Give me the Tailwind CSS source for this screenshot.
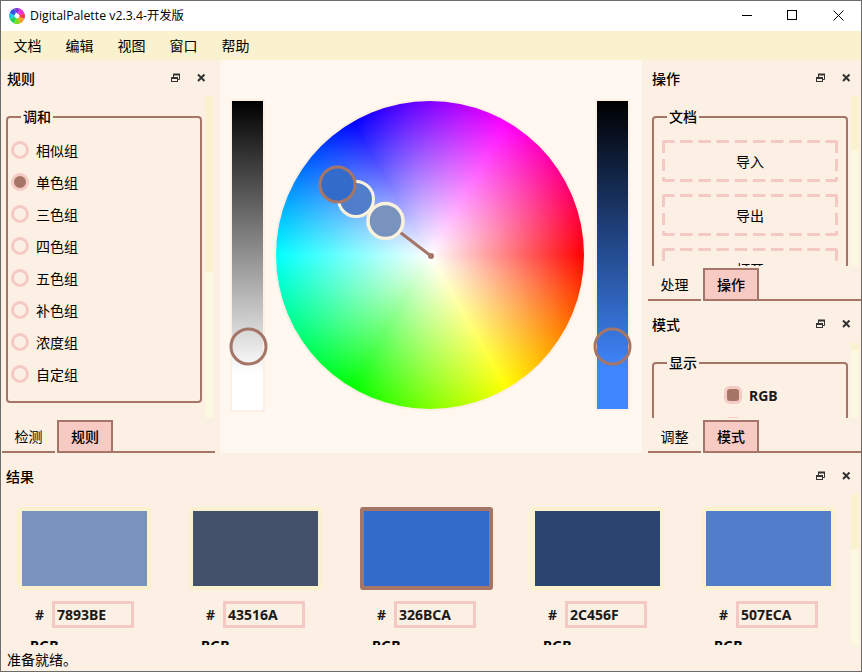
<!DOCTYPE html>
<html lang="zh-CN">
<head>
<meta charset="utf-8">
<title>DigitalPalette</title>
<script src="https://cdn.jsdelivr.net/npm/@tailwindcss/browser@4"></script>
</head>
<body class="w-[862px] h-[672px] overflow-hidden font-['Noto_Sans','Noto_Sans_CJK_SC',sans-serif] text-[14px] leading-5 text-black">
<svg class="absolute w-0 h-0">
  <defs>
    <pattern id="dots" width="2" height="2" patternUnits="userSpaceOnUse"><rect width="2" height="2" fill="#fefaec"/><rect width="1" height="1" fill="#f9f4d2"/><rect x="1" y="1" width="1" height="1" fill="#f9f4d2"/></pattern>
    <symbol id="dock" viewBox="0 0 40 12">
      <g fill="none" stroke="#333"><path d="M3.5 4V1.5H9.5V6.5H8"/><path d="M3 1.500H10M1 5H8" stroke-width="2"/><rect x="1.500" y="4.500" width="6" height="4"/></g>
      <path d="M28 1.500L34.500 8M34.500 1.500L28 8" stroke="#333" stroke-width="2"/>
    </symbol>
    <symbol id="dash" viewBox="0 0 176 42">
      <g stroke="#f4c9c3" stroke-width="3" fill="none">
        <path d="M1 1.500H176M1 40.500H176" stroke-dasharray="11.500 5.670 12.500 5.670 12.500 5.670 12.500 5.670 12.500 5.670 12.500 5.670 12.500 5.670 12.500 5.670 12.500 5.670 11.500 9"/>
        <path d="M1.500 1V42M174.500 1V42" stroke-dasharray="12 6 12 6 4 9"/>
      </g>
    </symbol>
  </defs>
</svg>
<div class="w-[862px] h-[672px] border border-[#6b6b6b] bg-[#fcefe3] flex flex-col">
  <header class="h-[30px] shrink-0 bg-white flex items-center pl-2">
    <svg width="16" height="16" viewBox="-8 -8 16 16"><g>
      <path d="M0 0L-3 -7.400A8 8 0 0 1 3 -7.400Z" fill="#8a35d8"/><path d="M0 0L3 -7.400A8 8 0 0 1 7.500 -2.500Z" fill="#f02bd0"/><path d="M0 0L7.500 -2.500A8 8 0 0 1 7.400 3Z" fill="#f23548"/><path d="M0 0L7.400 3A8 8 0 0 1 3 7.400Z" fill="#f4a020"/><path d="M0 0L3 7.400A8 8 0 0 1 -3 7.400Z" fill="#7bdc20"/><path d="M0 0L-3 7.400A8 8 0 0 1 -7.500 2.500Z" fill="#20d060"/><path d="M0 0L-7.500 2.500A8 8 0 0 1 -7.400 -3Z" fill="#1fc8e8"/><path d="M0 0L-7.400 -3A8 8 0 0 1 -3 -7.400Z" fill="#3054e0"/></g><path d="M-1 -3.500L1.500 -2L2.800 0L1 2.500L-1.500 2L-2.800 0Z" fill="#fff"/></svg>
    <span class="ml-[5px] text-[12.3px] font-['Open_Sans','Noto_Sans_CJK_SC',sans-serif]">DigitalPalette v2.3.4-开发版</span>
    <svg class="ml-auto mr-[14px] mb-[2px]" width="106" height="12" viewBox="0 0 106 12" fill="none" stroke="#000"><path d="M1 6.500H11"/><rect x="46.500" y="1.500" width="9" height="9"/><path d="M92.500 1.500L102.500 11.500M102.500 1.500L92.500 11.500"/></svg>
  </header>
  <nav class="h-[29px] shrink-0 bg-[#faf2cf] flex items-center pl-[12.5px] gap-6 pt-px">
    <span>文档</span><span>编辑</span><span>视图</span><span>窗口</span><span>帮助</span>
  </nav>
  <main class="h-[393px] shrink-0 flex">
    <aside class="w-[219px] shrink-0 flex flex-col">
      <div class="h-9 flex items-center pl-[6px] pt-px font-medium">规则<svg class="ml-auto mr-[10px]" width="40" height="12"><use href="#dock"/></svg></div>
      <div class="h-[322px] flex">
        <fieldset class="w-[196px] h-[296px] mt-[11px] ml-[5px] border-2 border-[#a57568] rounded-[4px] px-[3px] pt-[14px]">
          <legend class="ml-[10px] px-[2px] font-medium">调和</legend>
          <div class="flex flex-col gap-[14px] leading-[18px]">
            <label class="flex items-center gap-[7px] h-[18px]"><i class="size-[18px] rounded-full border-3 border-[#f6cac4]"></i><span class="pt-[2px]">相似组</span></label>
            <label class="flex items-center gap-[7px] h-[18px]"><i class="size-[18px] rounded-full border-3 border-[#f6cac4] bg-[#a57568]"></i><span class="pt-[2px]">单色组</span></label>
            <label class="flex items-center gap-[7px] h-[18px]"><i class="size-[18px] rounded-full border-3 border-[#f6cac4]"></i><span class="pt-[2px]">三色组</span></label>
            <label class="flex items-center gap-[7px] h-[18px]"><i class="size-[18px] rounded-full border-3 border-[#f6cac4]"></i><span class="pt-[2px]">四色组</span></label>
            <label class="flex items-center gap-[7px] h-[18px]"><i class="size-[18px] rounded-full border-3 border-[#f6cac4]"></i><span class="pt-[2px]">五色组</span></label>
            <label class="flex items-center gap-[7px] h-[18px]"><i class="size-[18px] rounded-full border-3 border-[#f6cac4]"></i><span class="pt-[2px]">补色组</span></label>
            <label class="flex items-center gap-[7px] h-[18px]"><i class="size-[18px] rounded-full border-3 border-[#f6cac4]"></i><span class="pt-[2px]">浓度组</span></label>
            <label class="flex items-center gap-[7px] h-[18px]"><i class="size-[18px] rounded-full border-3 border-[#f6cac4]"></i><span class="pt-[2px]">自定组</span></label>
          </div>
        </fieldset>
        <svg class="ml-[3px]" width="8" height="322"><rect width="8" height="322" fill="url(#dots)"/><rect width="8" height="176" fill="#faf2cf"/></svg>
      </div>
      <div class="h-[35px] pt-[2px] pl-px flex">
        <div class="w-[53px] border-b-2 border-[#a57568] flex items-center justify-center pt-[3px]">检测</div>
        <div class="w-[2px]"></div>
        <div class="w-[56px] border-2 border-[#a57568] bg-[#f8cac4] flex items-center justify-center pt-px font-medium">规则</div>
        <div class="w-[102px] border-b-2 border-[#a57568]"></div>
      </div>
    </aside>
    <section class="w-[422px] shrink-0 relative bg-[#fff8f0]">
      <div class="absolute left-[10px] top-[39px] w-[35px] h-[313px] border-2 border-[#fcefe3] bg-[linear-gradient(to_bottom,#000_0%,#fff_88%)]"></div>
      <div class="absolute left-[375px] top-[39px] w-[35px] h-[312px] border-2 border-[#fcefe3] bg-[linear-gradient(to_bottom,#000_0%,#4087ff_88%)]"></div>
      <div class="absolute left-[54px] top-[39px] size-[312px] rounded-full bg-[#fcefe3]"></div>
      <div class="absolute left-[56px] top-[41px] size-[308px] rounded-full bg-[radial-gradient(closest-side,#fff,#ffffff00),conic-gradient(from_90deg,#f00,#ff0,#0f0,#0ff,#00f,#f0f,#f00)]"></div>
      <svg class="absolute inset-0" width="422" height="393" viewBox="220 60 422 393" fill="none" stroke-width="3">
        <path d="M386 221.500L431 256" stroke="#a57568"/><circle cx="431" cy="256" r="3" fill="#a57568"/>
        <circle cx="356" cy="199" r="17.500" fill="#507eca" stroke="#faf2dc"/>
        <circle cx="385.500" cy="221" r="17.500" fill="#7893be" stroke="#faf2dc" stroke-width="3.500"/>
        <circle cx="337.500" cy="184.500" r="17.500" fill="#326bca" stroke="#a57568"/>
        <circle cx="248.500" cy="346.500" r="17.500" stroke="#a57568"/>
        <circle cx="612.500" cy="346.500" r="17.500" stroke="#a57568"/>
      </svg>
    </section>
    <aside class="w-[219px] shrink-0 flex flex-col">
      <div class="h-9 flex items-center pl-[10px] pt-px font-medium">操作<svg class="ml-auto mr-[6px]" width="40" height="12"><use href="#dock"/></svg></div>
      <div class="h-[170px] flex overflow-hidden">
        <fieldset class="w-[196px] h-[300px] mt-[11px] ml-[10px] border-2 border-[#a57568] rounded-[4px] px-2 pt-[13px]">
          <legend class="ml-[5px] px-[2px] font-medium">文档</legend>
          <div class="flex flex-col gap-3">
            <div class="h-[42px] grid place-items-center"><svg class="col-start-1 row-start-1" width="176" height="42"><use href="#dash"/></svg><span class="col-start-1 row-start-1 pt-px">导入</span></div>
            <div class="h-[42px] grid place-items-center"><svg class="col-start-1 row-start-1" width="176" height="42"><use href="#dash"/></svg><span class="col-start-1 row-start-1 pt-px">导出</span></div>
            <div class="h-[42px] grid place-items-center"><svg class="col-start-1 row-start-1" width="176" height="42"><use href="#dash"/></svg><span class="col-start-1 row-start-1 pt-px">打开</span></div>
          </div>
        </fieldset>
        <svg class="ml-[3px]" width="8" height="170"><rect width="8" height="170" fill="url(#dots)"/><rect width="8" height="54" fill="#faf2cf"/></svg>
      </div>
      <div class="h-[35px] pt-[2px] pl-[6px] flex">
        <div class="w-[53px] border-b-2 border-[#a57568] flex items-center justify-center pt-[3px]">处理</div>
        <div class="w-[2px]"></div>
        <div class="w-[56px] border-2 border-[#a57568] bg-[#f8cac4] flex items-center justify-center pt-px font-medium">操作</div>
        <div class="grow border-b-2 border-[#a57568]"></div>
      </div>
      <div class="h-[37px] mt-[5px] flex items-center pl-[10px] font-medium">模式<svg class="ml-auto mr-[6px]" width="40" height="12"><use href="#dock"/></svg></div>
      <div class="h-[75px] flex overflow-hidden">
        <fieldset class="w-[196px] h-[200px] mt-[10px] ml-[10px] border-2 border-[#a57568] rounded-[4px] pt-[13px]">
          <legend class="ml-[13px] px-[2px] font-medium">显示</legend>
          <div class="flex flex-col gap-[13px] pl-[70px] font-bold text-[#1a1a1a]">
            <label class="flex items-center gap-[7px] h-[18px]"><i class="size-[18px] rounded-[6px] border-3 border-[#f6cac4] bg-[#a57568]"></i><span class="pt-px">RGB</span></label>
            <label class="flex items-center gap-[7px] h-[18px]"><i class="size-[18px] rounded-[6px] border-3 border-[#f6cac4]"></i></label>
          </div>
        </fieldset>
        <svg class="ml-[3px]" width="8" height="75"><rect width="8" height="75" fill="url(#dots)"/><rect width="8" height="7" fill="#faf2cf"/></svg>
      </div>
      <div class="h-[35px] pt-[2px] pl-[6px] flex">
        <div class="w-[53px] border-b-2 border-[#a57568] flex items-center justify-center pt-[3px]">调整</div>
        <div class="w-[2px]"></div>
        <div class="w-[56px] border-2 border-[#a57568] bg-[#f8cac4] flex items-center justify-center pt-px font-medium">模式</div>
        <div class="grow border-b-2 border-[#a57568]"></div>
      </div>
    </aside>
  </main>
  <section class="h-[192px] shrink-0 flex flex-col">
    <div class="h-[41px] pt-[6px] flex items-center pl-[5px] font-medium">结果<svg class="ml-auto mr-[6px]" width="40" height="12"><use href="#dock"/></svg></div>
    <div class="h-[151px] flex overflow-hidden font-bold text-[#1a1a1a]">
      <div class="flex gap-[38px] pl-[17px] pt-[13px]">
        <div class="w-[133px]"><div class="h-[83px] border-4 border-[#faf2cf] rounded-[3px] bg-[#7893be]"></div><div class="flex items-center mt-[11px] pl-[17px]"><span class="w-[17px]">#</span><span class="w-[82px] h-[27px] border-3 border-[#f4c9c3] pl-[2px] leading-[22px]">7893BE</span></div><p class="pl-3 mt-[8px] text-black">RGB</p></div>
        <div class="w-[133px]"><div class="h-[83px] border-4 border-[#faf2cf] rounded-[3px] bg-[#43516a]"></div><div class="flex items-center mt-[11px] pl-[17px]"><span class="w-[17px]">#</span><span class="w-[82px] h-[27px] border-3 border-[#f4c9c3] pl-[2px] leading-[22px]">43516A</span></div><p class="pl-3 mt-[8px] text-black">RGB</p></div>
        <div class="w-[133px]"><div class="h-[83px] border-4 border-[#a57568] rounded-[3px] bg-[#326bca]"></div><div class="flex items-center mt-[11px] pl-[17px]"><span class="w-[17px]">#</span><span class="w-[82px] h-[27px] border-3 border-[#f4c9c3] pl-[2px] leading-[22px]">326BCA</span></div><p class="pl-3 mt-[8px] text-black">RGB</p></div>
        <div class="w-[133px]"><div class="h-[83px] border-4 border-[#faf2cf] rounded-[3px] bg-[#2c456f]"></div><div class="flex items-center mt-[11px] pl-[17px]"><span class="w-[17px]">#</span><span class="w-[82px] h-[27px] border-3 border-[#f4c9c3] pl-[2px] leading-[22px]">2C456F</span></div><p class="pl-3 mt-[8px] text-black">RGB</p></div>
        <div class="w-[133px]"><div class="h-[83px] border-4 border-[#faf2cf] rounded-[3px] bg-[#507eca]"></div><div class="flex items-center mt-[11px] pl-[17px]"><span class="w-[17px]">#</span><span class="w-[82px] h-[27px] border-3 border-[#f4c9c3] pl-[2px] leading-[22px]">507ECA</span></div><p class="pl-3 mt-[8px] text-black">RGB</p></div>
      </div>
      <svg class="ml-auto mr-[2px]" width="8" height="151"><rect width="8" height="151" fill="url(#dots)"/><rect width="8" height="55" fill="#faf2cf"/></svg>
    </div>
  </section>
  <footer class="grow flex items-center pl-[6px] pt-[4px]">准备就绪。</footer>
</div>
</body>
</html>
